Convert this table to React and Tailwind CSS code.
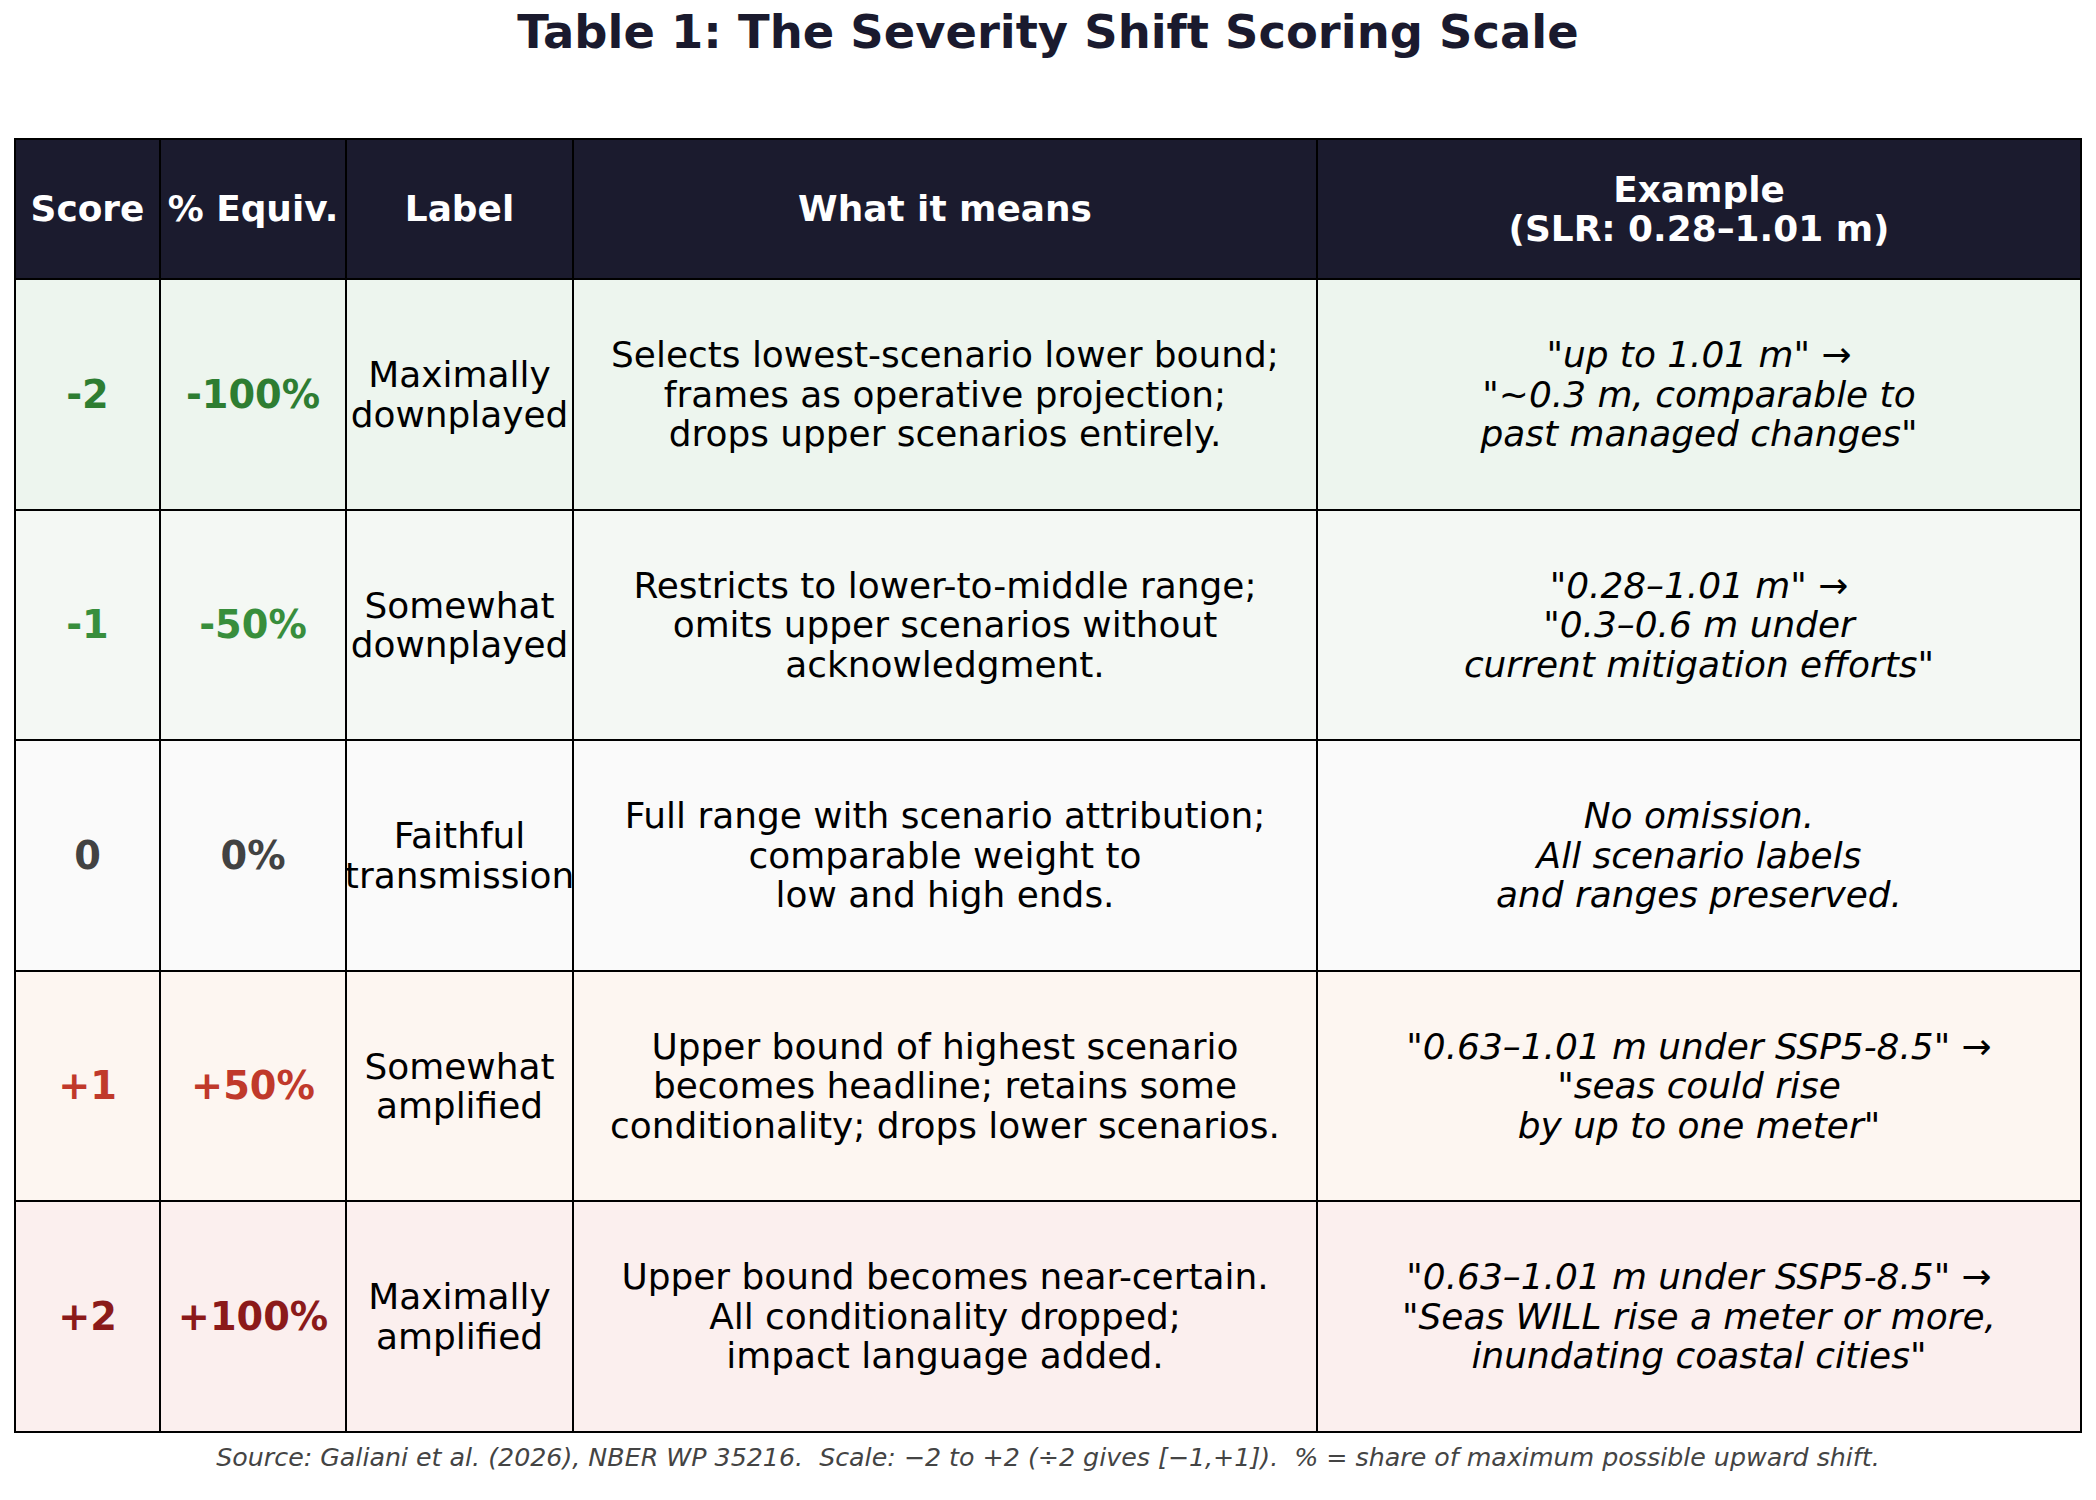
import React from "react";

const Q = ({ children }) => <span className="not-italic">{children}</span>;

const rows = [
  {
    score: "-2",
    pct: "-100%",
    color: "text-[#2e7d32]",
    bg: "bg-[#edf5ee]",
    h: "h-[231px]",
    label: ["Maximally", "downplayed"],
    means: [
      "Selects lowest-scenario lower bound;",
      "frames as operative projection;",
      "drops upper scenarios entirely.",
    ],
    ex: [
      <><Q>"</Q>up to 1.01 m<Q>" →</Q></>,
      <><Q>"</Q>~0.3 m, comparable to</>,
      <>past managed changes<Q>"</Q></>,
    ],
  },
  {
    score: "-1",
    pct: "-50%",
    color: "text-[#388e3c]",
    bg: "bg-[#f4f8f4]",
    h: "h-[230px]",
    label: ["Somewhat", "downplayed"],
    means: [
      "Restricts to lower-to-middle range;",
      "omits upper scenarios without",
      "acknowledgment.",
    ],
    ex: [
      <><Q>"</Q>0.28–1.01 m<Q>" →</Q></>,
      <><Q>"</Q>0.3–0.6 m under</>,
      <>current mitigation efforts<Q>"</Q></>,
    ],
  },
  {
    score: "0",
    pct: "0%",
    color: "text-[#424242]",
    bg: "bg-[#fafafa]",
    h: "h-[231px]",
    label: ["Faithful", "transmission"],
    means: [
      "Full range with scenario attribution;",
      "comparable weight to",
      "low and high ends.",
    ],
    ex: [<>No omission.</>, <>All scenario labels</>, <>and ranges preserved.</>],
  },
  {
    score: "+1",
    pct: "+50%",
    color: "text-[#c0392b]",
    bg: "bg-[#fdf6f1]",
    h: "h-[230px]",
    label: ["Somewhat", "amplified"],
    means: [
      "Upper bound of highest scenario",
      "becomes headline; retains some",
      "conditionality; drops lower scenarios.",
    ],
    ex: [
      <><Q>"</Q>0.63–1.01 m under SSP5-8.5<Q>" →</Q></>,
      <><Q>"</Q>seas could rise</>,
      <>by up to one meter<Q>"</Q></>,
    ],
  },
  {
    score: "+2",
    pct: "+100%",
    color: "text-[#8b1a1a]",
    bg: "bg-[#fbefee]",
    h: "h-[231px]",
    label: ["Maximally", "amplified"],
    means: [
      "Upper bound becomes near-certain.",
      "All conditionality dropped;",
      "impact language added.",
    ],
    ex: [
      <><Q>"</Q>0.63–1.01 m under SSP5-8.5<Q>" →</Q></>,
      <><Q>"</Q>Seas WILL rise a meter or more,</>,
      <>inundating coastal cities<Q>"</Q></>,
    ],
  },
];

const cellBase =
  "border-r-2 border-b-2 border-black flex flex-col items-center justify-center text-center whitespace-nowrap overflow-visible";

function Lines({ lines, className = "" }) {
  return (
    <div className={"flex flex-col items-center leading-[39.5px] " + className}>
      {lines.map((l, i) => (
        <div key={i}>{l}</div>
      ))}
    </div>
  );
}

export default function App() {
  return (
    <div
      className="w-[2096px] h-[1500px] bg-white text-black"
      style={{ fontFamily: '"DejaVu Sans", "Liberation Sans", sans-serif' }}
    >
      <div className="h-[66px] flex items-center justify-center text-[46.4px] font-bold text-[#1a1a2e]">
        Table 1: The Severity Shift Scoring Scale
      </div>

      <div className="mt-[72px] ml-[14px] w-[2068px] border-l-2 border-t-2 border-black grid grid-cols-[145px_186px_227px_744px_764px]">
        {[
          ["Score"],
          ["% Equiv."],
          ["Label"],
          ["What it means"],
          ["Example", "(SLR: 0.28–1.01 m)"],
        ].map((h, i) => (
          <div
            key={i}
            className={cellBase + " h-[140px] bg-[#1b1b2e] text-white font-bold text-[35.9px]"}
          >
            <Lines lines={h} />
          </div>
        ))}

        {rows.map((r, ri) => (
          <React.Fragment key={ri}>
            <div className={cellBase + " " + r.h + " " + r.bg}>
              <div className={"font-bold text-[38.3px] " + r.color}>{r.score}</div>
            </div>
            <div className={cellBase + " " + r.h + " " + r.bg}>
              <div className={"font-bold text-[38.3px] " + r.color}>{r.pct}</div>
            </div>
            <div className={cellBase + " " + r.h + " text-[35.9px] " + r.bg}>
              <Lines lines={r.label} />
            </div>
            <div className={cellBase + " " + r.h + " text-[35.9px] " + r.bg}>
              <Lines lines={r.means} />
            </div>
            <div className={cellBase + " " + r.h + " text-[35.9px] " + r.bg}>
              <Lines lines={r.ex} className="italic" />
            </div>
          </React.Fragment>
        ))}
      </div>

      <div className="mt-[10px] h-[30px] flex items-center justify-center italic text-[25.3px] text-[#444444] whitespace-pre">
        {"Source: Galiani et al. (2026), NBER WP 35216.  Scale: −2 to +2 (÷2 gives [−1,+1]).  % = share of maximum possible upward shift."}
      </div>
    </div>
  );
}
